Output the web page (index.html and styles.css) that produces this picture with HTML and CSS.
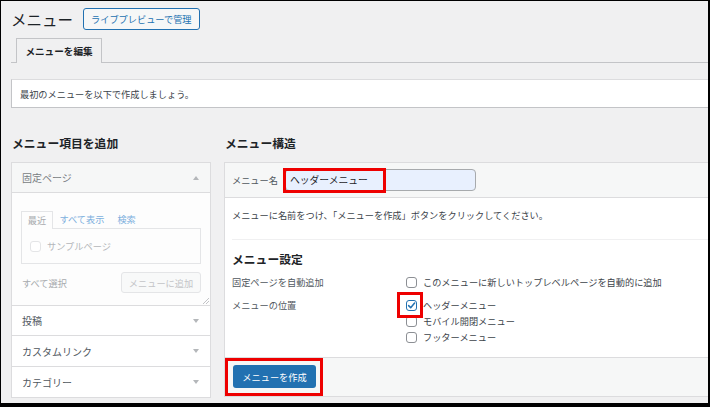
FILE: index.html
```html
<!DOCTYPE html>
<html lang="ja">
<head>
<meta charset="utf-8">
<title>メニュー</title>
<link rel="stylesheet" href="styles.css">
</head>
<body>
<div class="frame">
  <div class="wrap">
    <div class="head">
      <h1 class="title">メニュー</h1>
      <a class="btn-outline">ライブプレビューで管理</a>
    </div>
    <div class="tabs"><span class="tab">メニューを編集</span></div>
    <div class="notice">最初のメニューを以下で作成しましょう。</div>

    <div class="cols">
      <div class="col-left">
        <h2 class="h2">メニュー項目を追加</h2>
        <div class="acc">
          <div class="acc-head open">固定ページ<span class="tri up"></span></div>
          <div class="acc-body">
            <div class="itabs">
              <span class="itab active">最近</span>
              <span class="itab link">すべて表示</span>
              <span class="itab link">検索</span>
            </div>
            <div class="ipanel">
              <span class="opt dis"><span class="cb cb-dis"></span>サンプルページ</span>
            </div>
            <div class="arow">
              <span class="selall">すべて選択</span>
              <span class="btn-dis">メニューに追加</span>
            </div>
            <svg class="resize" width="6" height="6" viewBox="0 0 6 6"><path d="M6 0 L0 6 M6 3 L3 6" stroke="#c3c4c7" stroke-width="1" fill="none"/></svg>
          </div>
          <div class="acc-head">投稿<span class="tri"></span></div>
          <div class="acc-head tall">カスタムリンク<span class="tri"></span></div>
          <div class="acc-head last">カテゴリー<span class="tri"></span></div>
        </div>
      </div>

      <div class="col-right">
        <h2 class="h2">メニュー構造</h2>
        <div class="menu">
          <div class="mhead">
            <span class="mlabel">メニュー名</span>
            <span class="field">
              <input class="name-input" type="text" value="ヘッダーメニュー">
              <span class="mark mark-input"></span>
            </span>
          </div>
          <div class="mbody">
            <p class="desc">メニューに名前をつけ、「メニューを作成」ボタンをクリックしてください。</p>
            <div class="divider"></div>
            <h3 class="h3">メニュー設定</h3>
            <div class="srow first">
              <span class="slabel">固定ページを自動追加</span>
              <div class="opts">
                <span class="opt"><span class="cb"></span>このメニューに新しいトップレベルページを自動的に追加</span>
              </div>
            </div>
            <div class="srow">
              <span class="slabel">メニューの位置</span>
              <div class="opts">
                <span class="opt"><span class="cbwrap"><span class="cb checked"><svg width="9" height="9" viewBox="0 0 9 9"><path d="M1.6 4.6 L3.7 6.7 L7.6 2" stroke="#2271b1" stroke-width="1.5" fill="none" stroke-linecap="round" stroke-linejoin="round"/></svg></span><span class="mark mark-cb"></span></span>ヘッダーメニュー</span>
                <span class="opt"><span class="cb"></span>モバイル開閉メニュー</span>
                <span class="opt"><span class="cb"></span>フッターメニュー</span>
              </div>
            </div>
          </div>
          <div class="mfoot">
            <span class="btnwrap">
              <span class="btn-primary">メニューを作成</span>
              <span class="mark mark-btn"></span>
            </span>
          </div>
        </div>
      </div>
    </div>
  </div>
</div>
</body>
</html>
```

FILE: styles.css
```css
html, body {
  margin: 0;
  padding: 0;
  background: #000;
}

.frame {
  width: 710px;
  height: 407px;
  box-sizing: border-box;
  border-style: solid;
  border-color: #000;
  border-width: 1px 2px 4px 1px;
  background: #f0f0f1;
  overflow: hidden;
  font-family: "Noto Sans CJK JP", "Noto Sans", sans-serif;
  font-size: 9.2px;
  color: #3c434a;
}

.wrap {
  width: 780px;
  padding-left: 10px;
}

/* header */
.head {
  display: flex;
  align-items: center;
  gap: 10px;
  height: 22px;
  margin-top: 7px;
}

.title {
  margin: 0;
  font-size: 15.5px;
  font-weight: 400;
  line-height: 22px;
  color: #1d2327;
}

.btn-outline {
  box-sizing: border-box;
  height: 22px;
  line-height: 20px;
  padding: 0 7px;
  border: 1px solid #2271b1;
  border-radius: 3px;
  background: #f6f7f7;
  color: #2271b1;
  font-size: 9.2px;
}

/* tabs */
.tabs {
  display: flex;
  margin-top: 8px;
  height: 24px;
  padding-left: 5px;
  border-bottom: 1px solid #c3c4c7;
}

.tab {
  box-sizing: border-box;
  width: 86px;
  height: 25px;
  border: 1px solid #c3c4c7;
  border-bottom: none;
  background: #f0f0f1;
  display: flex;
  align-items: center;
  justify-content: center;
  font-weight: 700;
  font-size: 9.6px;
  color: #1d2327;
}

/* notice */
.notice {
  box-sizing: border-box;
  margin-top: 16px;
  height: 29px;
  border: 1px solid #c3c4c7;
  border-color: #dcdcde #dcdcde #c3c4c7 #c3c4c7;
  background: #fff;
  display: flex;
  align-items: center;
  padding-left: 8px;
  color: #3c434a;
}

/* columns */
.cols {
  display: flex;
  gap: 13px;
  margin-top: 26px;
}

.col-left {
  width: 200px;
  flex: none;
}

.col-right {
  flex: 1;
}

.h2 {
  margin: 0 0 10px;
  padding-left: 1px;
  font-size: 11.8px;
  font-weight: 700;
  line-height: 18px;
  color: #1d2327;
}

/* left accordion */
.acc {
  border: 1px solid #dcdcde;
  background: #fff;
}

.acc-head {
  height: 29px;
  border-bottom: 1px solid #dcdcde;
  display: flex;
  align-items: center;
  padding-left: 10px;
  font-size: 10px;
  color: #50575e;
  background: #fff;
}

.acc-head.open {
  background: #f6f7f7;
  color: #787c82;
}

.acc-head.tall {
  height: 30px;
}

.acc-head.last {
  height: 30px;
  border-bottom: none;
}

.tri {
  margin-left: auto;
  margin-right: 11px;
  width: 0;
  height: 0;
  border-left: 3px solid transparent;
  border-right: 3px solid transparent;
  border-top: 4px solid #b4b7ba;
}

.tri.up {
  border-top: none;
  border-bottom: 4px solid #b4b7ba;
}

.acc-body {
  position: relative;
  box-sizing: border-box;
  height: 113px;
  padding: 18px 9px 0 9px;
  border-bottom: 1px solid #dcdcde;
  background: #fdfdfd;
}

.itabs {
  display: flex;
  height: 17px;
  align-items: flex-start;
}

.itab {
  height: 17px;
  line-height: 17px;
  white-space: nowrap;
  font-size: 9.2px;
}

.itab.active {
  position: relative;
  z-index: 1;
  box-sizing: border-box;
  width: 32px;
  height: 18px;
  padding: 0;
  text-align: center;
  border: 1px solid #e4e5e7;
  border-bottom: none;
  background: #fdfdfd;
  color: #a7aaad;
  line-height: 17px;
}

.itab.link {
  color: #7eb0de;
  padding: 0 6.5px;
}

.ipanel {
  box-sizing: border-box;
  height: 36px;
  border: 1px solid #e4e5e7;
  display: flex;
  align-items: center;
  padding-left: 8px;
}

.opt {
  display: flex;
  align-items: center;
  gap: 6px;
  height: 16px;
  white-space: nowrap;
}

.opt.dis {
  color: #b4b7ba;
  font-size: 9.2px;
}

.cb {
  box-sizing: border-box;
  width: 11px;
  height: 11px;
  border: 1px solid #8c8f94;
  border-radius: 3px;
  background: #fff;
  flex: none;
  display: flex;
  align-items: center;
  justify-content: center;
}

.cb-dis {
  border-color: #e4e5e7;
}

.cb.checked {
  border: 1.3px solid #2271b1;
}

.arow {
  display: flex;
  align-items: center;
  justify-content: space-between;
  margin-top: 8px;
  height: 21px;
}

.selall {
  padding-left: 1px;
  color: #a7aaad;
}

.btn-dis {
  box-sizing: border-box;
  width: 80px;
  height: 21px;
  border: 1px solid #e4e5e7;
  border-radius: 3px;
  background: #f8f9f9;
  color: #c3c4c7;
  display: flex;
  align-items: center;
  justify-content: center;
}

.resize {
  position: absolute;
  right: 1px;
  bottom: 1px;
}

/* right menu panel */
.menu {
  border: 1px solid #dcdcde;
  background: #fff;
}

.mhead {
  height: 34px;
  border-bottom: 1px solid #dcdcde;
  background: #f6f7f7;
  display: flex;
  align-items: center;
  padding-left: 7px;
}

.mlabel {
  margin-right: 7px;
  color: #50575e;
}

.field {
  position: relative;
  display: flex;
}

.name-input {
  box-sizing: border-box;
  width: 191px;
  height: 22px;
  margin: 0;
  padding: 0 4px;
  border: 1px solid #a7aaad;
  border-radius: 4px;
  background: #e8f0fe;
  font-family: "Noto Sans CJK JP", "Noto Sans", sans-serif;
  font-size: 9.8px;
  color: #1d2327;
  outline: none;
}

.mark {
  position: absolute;
  box-sizing: border-box;
  border: 3px solid #ee0000;
  pointer-events: none;
}

.mark-input {
  left: -2px;
  top: -1px;
  width: 103px;
  height: 25px;
}

.mbody {
  padding: 9px 7px 12px;
}

.desc {
  margin: 0;
  line-height: 16px;
  color: #3c434a;
}

.divider {
  margin-top: 16px;
  border-top: 1px solid #f0f0f1;
}

.h3 {
  margin: 10px 0 0;
  font-size: 11.8px;
  font-weight: 700;
  line-height: 18px;
  color: #1d2327;
}

.srow {
  display: flex;
  margin-top: 7px;
  line-height: 16px;
}

.srow.first {
  margin-top: 6px;
}

.slabel {
  width: 174px;
  flex: none;
  color: #50575e;
}

.opts {
  display: flex;
  flex-direction: column;
  color: #3c434a;
}

.cbwrap {
  position: relative;
  display: flex;
}

.mark-cb {
  left: -9px;
  top: -8px;
  width: 26px;
  height: 26px;
}

.mfoot {
  border-top: 1px solid #dcdcde;
  background: #f6f7f7;
  padding: 7px 8px 8px;
  height: 23px;
}

.btnwrap {
  position: relative;
  display: inline-flex;
}

.btn-primary {
  box-sizing: border-box;
  width: 83px;
  height: 23px;
  border-radius: 3px;
  background: #2271b1;
  color: #fff;
  display: flex;
  align-items: center;
  justify-content: center;
  font-size: 9.2px;
}

.mark-btn {
  left: -8px;
  top: -7px;
  width: 98px;
  height: 38px;
}
```
